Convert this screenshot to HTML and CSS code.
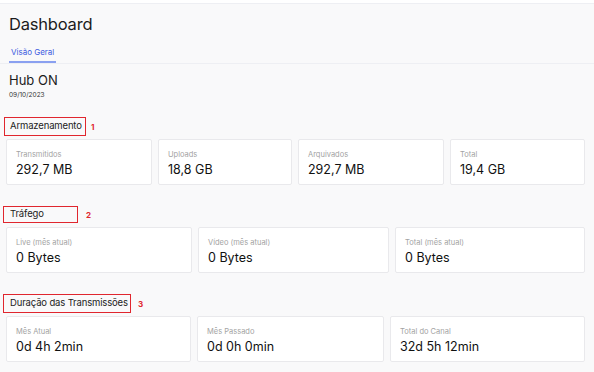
FILE: index.html
```html
<!DOCTYPE html>
<html lang="pt-BR">
<head>
    <meta charset="UTF-8">
    <meta name="viewport" content="width=device-width, initial-scale=1.0">
    <title>Dashboard</title>
    <link rel="stylesheet" href="styles.css">
</head>
<body>
    <div class="topbar"></div>
    <div class="page">
        <h1 class="title">Dashboard</h1>
        <div class="tabs">
            <span class="tab active">Visão Geral</span>
        </div>

        <div class="hub">
            <h2>Hub ON</h2>
            <span class="date">09/10/2023</span>
        </div>

        <div class="section first">
            <div class="section-head">
                <h3 class="section-title storage">Armazenamento</h3>
                <span class="mark">1</span>
            </div>
            <div class="cards cards-storage">
                <div class="card"><span class="label">Transmitidos</span><span class="value">292,7 MB</span></div>
                <div class="card"><span class="label">Uploads</span><span class="value">18,8 GB</span></div>
                <div class="card"><span class="label">Arquivados</span><span class="value">292,7 MB</span></div>
                <div class="card"><span class="label">Total</span><span class="value">19,4 GB</span></div>
            </div>
        </div>

        <div class="section">
            <div class="section-head">
                <h3 class="section-title traffic">Tráfego</h3>
                <span class="mark">2</span>
            </div>
            <div class="cards cards-traffic">
                <div class="card"><span class="label">Live (mês atual)</span><span class="value">0 Bytes</span></div>
                <div class="card"><span class="label">Vídeo (mês atual)</span><span class="value">0 Bytes</span></div>
                <div class="card"><span class="label">Total (mês atual)</span><span class="value">0 Bytes</span></div>
            </div>
        </div>

        <div class="section">
            <div class="section-head">
                <h3 class="section-title duration">Duração das Transmissões</h3>
                <span class="mark">3</span>
            </div>
            <div class="cards cards-duration">
                <div class="card"><span class="label">Mês Atual</span><span class="value">0d 4h 2min</span></div>
                <div class="card"><span class="label">Mês Passado</span><span class="value">0d 0h 0min</span></div>
                <div class="card"><span class="label">Total do Canal</span><span class="value">32d 5h 12min</span></div>
            </div>
        </div>
    </div>
</body>
</html>
```

FILE: styles.css
```css
body {
    margin: 0;
    font-family: Inter, "Open Sans", sans-serif;
    background-color: #f9f9fa;
    color: #1c1c1c;
}

.topbar {
    height: 3px;
    background-color: #fff;
    border-bottom: 1px solid #eeeff3;
}

.page {
    padding: 0 9px 0 6px;
}

.title {
    margin: 10px 0 0 3px;
    font-size: 16.5px;
    font-weight: 400;
    line-height: 20px;
    letter-spacing: -0.2px;
}

.tabs {
    margin: 12px -9px 0 -6px;
    padding-left: 9px;
    border-bottom: 1px solid #eeeff3;
    display: flex;
}

.tab {
    font-size: 8px;
    line-height: 12px;
    padding: 0 2px 3px;
    color: #3d5ce0;
}

.tab.active {
    border-bottom: 2px solid #8aa0f0;
}

.hub {
    margin: 8px 0 0 3px;
}

.hub h2 {
    margin: 0;
    font-size: 13px;
    font-weight: 400;
    line-height: 17px;
}

.date {
    display: block;
    margin-top: 2px;
    font-size: 6.5px;
    line-height: 9px;
    color: #333;
}

.section-head {
    display: flex;
    align-items: center;
    margin-left: -3px;
    white-space: nowrap;
}

.section-title {
    margin: 0;
    box-sizing: border-box;
    height: 19px;
    padding: 0 0 0 5px;
    border: 1.5px solid #e0262e;
    font-size: 9.5px;
    font-weight: 400;
    line-height: 16px;
    letter-spacing: -0.15px;
}

.storage {
    width: 82px;
    margin-left: 1px;
}

.traffic {
    width: 75px;
    height: 17px;
    line-height: 14px;
    padding-left: 6px;
}

.duration {
    width: 128px;
    padding-left: 6px;
}

.mark {
    margin-left: 5px;
    font-size: 8px;
    font-weight: 700;
    color: #e0262e;
}

.traffic + .mark {
    margin-left: 8px;
}

.duration + .mark {
    margin-left: 7px;
}

.section.first {
    margin-top: 17px;
}

.section + .section {
    margin-top: 21px;
}

.cards {
    display: grid;
    gap: 6px;
    margin-top: 3px;
}

.cards-storage {
    grid-template-columns: 146fr 134fr 146fr 135fr;
}

.cards-traffic {
    grid-template-columns: 186fr 191fr 190fr;
    margin-top: 4px;
}

.cards-duration {
    grid-template-columns: 185fr 187fr 195fr;
    margin-top: 3px;
}

.card {
    display: flex;
    flex-direction: column;
    height: 46px;
    box-sizing: border-box;
    padding: 10px 9px 0;
    background-color: #fff;
    border: 1px solid #e9e9ec;
    border-radius: 2px;
}

.label {
    font-size: 7.5px;
    line-height: 10px;
    color: #a3a3a3;
}

.value {
    margin-top: 2px;
    font-size: 12.5px;
    line-height: 16px;
    color: #111;
}
```
